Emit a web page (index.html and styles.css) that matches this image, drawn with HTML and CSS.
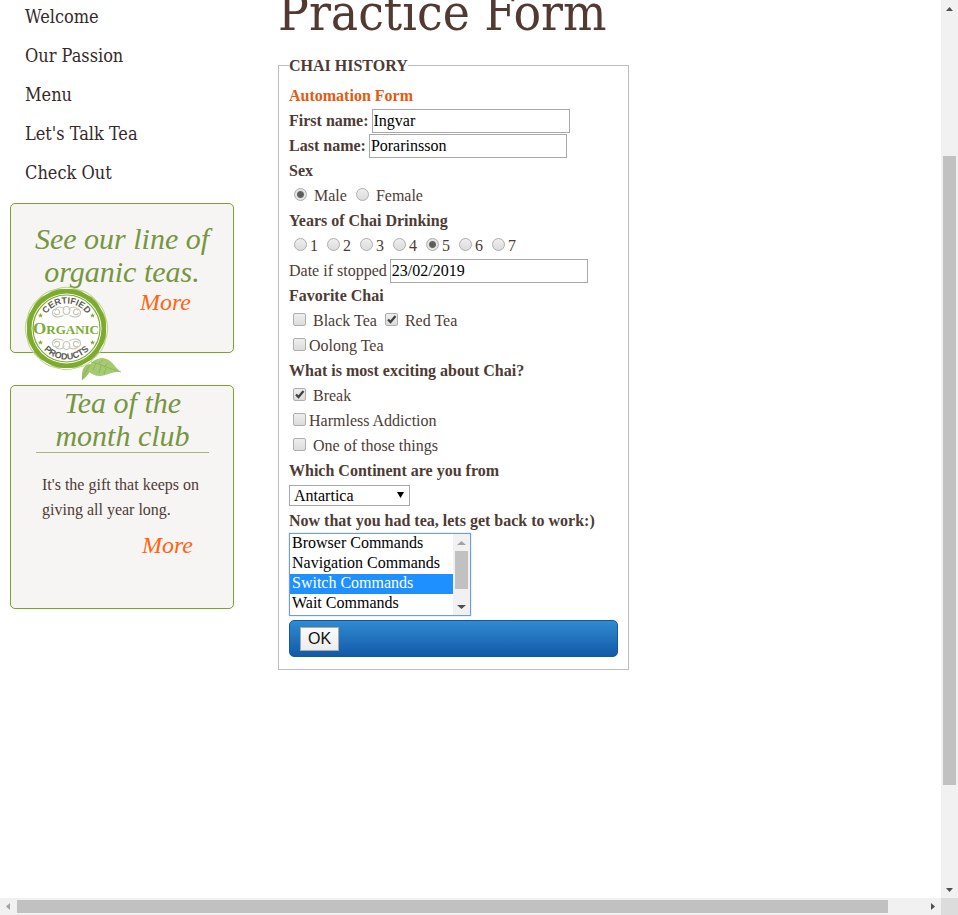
FILE: index.html
```html
<!DOCTYPE html>
<html lang="en">
<head>
<meta charset="utf-8">
<title>Practice Form</title>
<link rel="stylesheet" href="styles.css">
</head>
<body>
<div class="page">
  <aside class="sidebar">
    <nav class="menu">
      <a href="#">Welcome</a>
      <a href="#">Our Passion</a>
      <a href="#">Menu</a>
      <a href="#">Let's Talk Tea</a>
      <a href="#">Check Out</a>
    </nav>
    <section class="promo organic">
      <h2>See our line of<br>organic teas.</h2>
      <a class="more" href="#">More</a>
      <svg class="badge" width="100" height="98" viewBox="22 284 100 98" aria-hidden="true">
        <defs>
          <path id="arcTop" d="M41.500 328.500a25 25 0 0 1 50 0"/>
          <path id="arcBottom" d="M35.500 328.500a31 31 0 0 0 62 0"/>
          <path id="star" d="M0-2.600 .7-.8 2.500-.8 1.100.4 1.600 2.200 0 1.100-1.600 2.200-1.100.4-2.500-.8-.7-.8Z"/>
        </defs>
        <g transform="translate(66.500 328.500)">
          <g fill="none" stroke="#bdd48c" stroke-width="1">
            <rect x="-37" y="-37" width="74" height="74" rx="27" transform="rotate(15)"/>
            <rect x="-37" y="-37" width="74" height="74" rx="27" transform="rotate(45)"/>
            <rect x="-37" y="-37" width="74" height="74" rx="27" transform="rotate(75)"/>
          </g>
          <g fill="#7eab2f">
            <rect x="-37" y="-37" width="74" height="74" rx="30"/>
            <rect x="-37" y="-37" width="74" height="74" rx="30" transform="rotate(30)"/>
            <rect x="-37" y="-37" width="74" height="74" rx="30" transform="rotate(60)"/>
          </g>
          <circle r="35" fill="#fff"/>
          <circle r="33.500" fill="#fff" stroke="#7eab2f" stroke-width="1.200"/>
          <g fill="none" stroke="#c5c4b4" stroke-width="1.100">
            <path d="M0-14c-4 0-5-8 0-8s4 8 0 8M-3-13c-7 3-11 1-11-3s6-5 7-1-5 4-5 1M-2-19c-3-4-9-3-9 1M3-13c7 3 11 1 11-3s-6-5-7-1 5 4 5 1M2-19c3-4 9-3 9 1"/>
            <path d="M0 13c-4 0-5 8 0 8s4-8 0-8M-3 12c-7-3-11-1-11 3s6 5 7 1-5-4-5-1M-2 18c-3 4-9 3-9-1M3 12c7-3 11-1 11 3s-6 5-7 1 5-4 5-1M2 18c3 4 9 3 9-1"/>
          </g>
          <g fill="#7eab2f">
            <use href="#star" x="-26" y="-13"/><use href="#star" x="26" y="-13"/>
            <use href="#star" x="-26" y="14"/><use href="#star" x="26" y="14"/>
          </g>
        </g>
        <text class="badge-ring"><textPath href="#arcTop" startOffset="50%">CERTIFIED</textPath></text>
        <text class="badge-ring"><textPath href="#arcBottom" startOffset="50%">PRODUCTS</textPath></text>
        <text class="badge-name" x="66" y="334"><tspan class="badge-cap">O</tspan>RGANIC</text>
        <path d="M82 380c-1-10 2-16 9-16 1 6-3 12-9 16Z" fill="#9fc368"/>
        <path d="M89 372c-1-9 6-14 14-14 9 1 11 9 18 14-8-1-14 4-21 4-5 0-8-2-11-4Z" fill="#a6ca72"/>
        <path d="M91 362c8 1 18 7 30 10M96 363l-3 7M101 365l-2 8M106 368l-2 6M98 364l5-4M104 367l4-4M82 380c2-5 4-9 8-15" fill="none" stroke="#85b053" stroke-width=".7"/>
      </svg>
    </section>
    <section class="promo club">
      <h2>Tea of the<br>month club</h2>
      <p>It's the gift that keeps on giving all year long.</p>
      <a class="more" href="#">More</a>
    </section>
  </aside>
  <main class="content">
    <h1>Practice Form</h1>
    <form>
      <fieldset>
        <legend>CHAI HISTORY</legend>
        <h3 class="row accent">Automation Form</h3>
        <div class="row field"><label class="strong" for="first">First name:</label><input class="text" id="first" type="text" value="Ingvar"></div>
        <div class="row field"><label class="strong" for="last">Last name:</label><input class="text" id="last" type="text" value="Porarinsson"></div>
        <div class="row strong">Sex</div>
        <div class="row">
          <input type="radio" name="sex" id="male" checked> <label for="male">Male</label>
          <input type="radio" name="sex" id="female"> <label for="female">Female</label>
        </div>
        <div class="row strong">Years of Chai Drinking</div>
        <div class="row">
          <input type="radio" name="years" id="y1"><label for="y1">1</label>
          <input type="radio" name="years" id="y2"><label for="y2">2</label>
          <input type="radio" name="years" id="y3"><label for="y3">3</label>
          <input type="radio" name="years" id="y4"><label for="y4">4</label>
          <input type="radio" name="years" id="y5" checked><label for="y5">5</label>
          <input type="radio" name="years" id="y6"><label for="y6">6</label>
          <input type="radio" name="years" id="y7"><label for="y7">7</label>
        </div>
        <div class="row field"><label for="stopped">Date if stopped</label><input class="text" id="stopped" type="text" value="23/02/2019"></div>
        <div class="row strong">Favorite Chai</div>
        <div class="row">
          <input type="checkbox" id="black"> <label for="black">Black Tea</label>
          <input type="checkbox" id="red" checked> <label for="red">Red Tea</label>
        </div>
        <div class="row"><input type="checkbox" id="oolong"><label for="oolong">Oolong Tea</label></div>
        <div class="row strong">What is most exciting about Chai?</div>
        <div class="row"><input type="checkbox" id="break" checked> <label for="break">Break</label></div>
        <div class="row"><input type="checkbox" id="harmless"><label for="harmless">Harmless Addiction</label></div>
        <div class="row"><input type="checkbox" id="things"> <label for="things">One of those things</label></div>
        <label class="row strong" for="continent">Which Continent are you from</label>
        <div class="row field">
          <span class="dropdown">
            <select id="continent"><option>Antartica</option></select>
            <svg class="caret" width="7" height="6" viewBox="0 0 7 6" aria-hidden="true"><path d="M0 0h7L3.500 6Z"/></svg>
          </span>
        </div>
        <label class="row strong" for="commands">Now that you had tea, lets get back to work:)</label>
        <div class="listbox">
          <select id="commands" multiple size="4">
            <option>Browser Commands</option>
            <option>Navigation Commands</option>
            <option selected>Switch Commands</option>
            <option>Wait Commands</option>
          </select>
          <div class="bar vertical" aria-hidden="true">
            <svg class="arrow faint" width="17" height="17" viewBox="0 0 17 17"><path d="M4 11h9L8.500 7Z"/></svg>
            <div class="thumb list-thumb"></div>
            <div class="list-rest"></div>
            <svg class="arrow" width="17" height="17" viewBox="0 0 17 17"><path d="M4 7h9l-4.500 4Z"/></svg>
          </div>
        </div>
        <div class="submit"><button type="button">OK</button></div>
      </fieldset>
    </form>
  </main>
</div>
<div class="bar vertical" aria-hidden="true">
  <svg class="arrow" width="17" height="17" viewBox="0 0 17 17"><path d="M5 11h7L8.500 7Z"/></svg>
  <div class="page-before"></div>
  <div class="thumb page-thumb"></div>
  <div class="page-after"></div>
  <svg class="arrow" width="17" height="17" viewBox="0 0 17 17"><path d="M5 7h7l-3.500 4Z"/></svg>
</div>
<div class="bar horizontal" aria-hidden="true">
  <svg class="arrow faint" width="17" height="17" viewBox="0 0 17 17"><path d="M10 5v7L6 8.500Z"/></svg>
  <div class="thumb wide-thumb"></div>
  <div class="wide-after"></div>
  <svg class="arrow" width="17" height="17" viewBox="0 0 17 17"><path d="M7 5v7l4-3.500Z"/></svg>
</div>
<div class="corner"></div>
</body>
</html>
```
FILE: styles.css
```css
* { box-sizing: border-box; }

body {
  margin: 0;
  height: 100vh;
  display: grid;
  grid-template-columns: minmax(0, 1fr) 17px;
  grid-template-rows: minmax(0, 1fr) 17px;
  background: #fff;
  color: #4e3b35;
  font: 16px/25px "Liberation Serif", serif;
}

.page {
  display: flex;
  align-items: flex-start;
  gap: 44px;
  padding-left: 10px;
  overflow: hidden;
}

/* Sidebar */
.sidebar {
  flex: 0 0 224px;
  margin-top: -3px;
}
.menu {
  display: flex;
  flex-direction: column;
  padding-left: 15px;
  margin-bottom: 11px;
}
.menu a {
  color: #36292a;
  font: 18px/39px "DejaVu Serif Condensed", "DejaVu Serif", serif;
  text-decoration: none;
}
.promo {
  position: relative;
  display: flex;
  flex-direction: column;
  border: 1px solid #7aa32a;
  border-radius: 5px;
  background: #f6f5f4;
}
.promo h2 {
  margin: 0;
  color: #76963f;
  font: italic 30px/33px "Liberation Serif", serif;
  text-align: center;
}
.more {
  align-self: flex-end;
  color: #ff6412;
  font: italic 24px/28px "Liberation Serif", serif;
  text-decoration: none;
}
.organic {
  min-height: 150px;
  margin-bottom: 32px;
  padding: 18px 0 0;
}
.organic .more { margin-right: 42px; }
.badge {
  position: absolute;
  left: 11px;
  top: 80px;
}
.badge-ring {
  fill: #5b5b55;
  font: bold 9px "Liberation Sans", sans-serif;
  text-anchor: middle;
}
.badge-name {
  fill: #7eab2f;
  font: bold 13px "Liberation Serif", serif;
  text-anchor: middle;
}
.badge-cap { font-size: 17px; }
.club {
  min-height: 224px;
  padding: 0 24px 0 25px;
}
.club h2 { border-bottom: 1px solid #a3b87c; }
.club p { margin: 19px 0 9px 6px; }
.club .more { margin-right: 16px; }

/* Form */
.content { margin-top: -17px; }
h1 {
  margin: 0 0 10px;
  color: #523a33;
  font: 51px/60px "DejaVu Serif Condensed", "DejaVu Serif", serif;
  white-space: nowrap;
}
fieldset {
  width: 351px;
  margin: 0;
  padding: 5px 10px 12px;
  border: 1px solid #bdbdbd;
}
legend {
  padding: 0;
  font-weight: bold;
}
.row {
  display: block;
  height: 25px;
  margin: 0;
}
.strong, .accent {
  font-size: 16px;
  font-weight: bold;
}
.accent { color: #e55a10; }
.field {
  display: flex;
  align-items: center;
  gap: 3px;
}
.text {
  width: 198px;
  height: 24px;
  padding: 1px;
  border: 1px solid #a9a9a9;
  background: #fff;
  color: #000;
  font: inherit;
}
input[type="radio"], input[type="checkbox"] {
  appearance: none;
  width: 13px;
  height: 13px;
  border: 1px solid #adadad;
  background: linear-gradient(#eee, #dcdcdc);
  vertical-align: baseline;
}
input[type="radio"] {
  margin: 0 3px 0 5px;
  border-radius: 50%;
}
input[type="checkbox"] {
  margin: 0 3px 0 4px;
  border-radius: 2px;
}
input[type="radio"]:checked {
  background: radial-gradient(circle, #5c5c5c 0 2px, #666 3px, #e4e4e4 4px);
}
input[type="checkbox"]:checked {
  background: url("data:image/svg+xml,%3Csvg xmlns='http://www.w3.org/2000/svg' viewBox='0 0 11 11'%3E%3Cpath d='M2 5.500 4.500 8 9.500 2' fill='none' stroke='%23404040' stroke-width='2.200'/%3E%3C/svg%3E"), linear-gradient(#eee, #dcdcdc);
}
.dropdown {
  position: relative;
  display: flex;
}
.dropdown select {
  appearance: none;
  width: 121px;
  height: 21px;
  padding: 0 4px;
  border: 1px solid #a9a9a9;
  border-radius: 0;
  background: #fff;
  color: #000;
  font: 16px/19px "Liberation Serif", serif;
}
.caret {
  position: absolute;
  right: 6px;
  top: 7px;
  pointer-events: none;
}
.listbox {
  display: flex;
  width: 182px;
  height: 83px;
  border: 1px solid #6f9bdf;
  box-shadow: 0 0 1px 0 #86aef0;
}
.listbox select {
  flex: 1;
  min-width: 0;
  height: 100%;
  padding: 0;
  border: 0;
  border-radius: 0;
  outline: 0;
  background: #fff;
  color: #000;
  font: 16px/20px "Liberation Serif", serif;
  overflow: hidden;
}
.listbox option {
  min-height: 20px;
  padding: 0 2px;
}
.listbox option:checked {
  background: linear-gradient(#1e90ff, #1e90ff);
  -webkit-text-fill-color: #fff;
}
.submit {
  display: flex;
  margin-top: 4px;
  padding: 6px 10px 5px;
  border: 1px solid #125a9f;
  border-radius: 5px;
  background: linear-gradient(#318ad1, #115aa7);
}
.submit button {
  width: 39px;
  height: 24px;
  padding: 0;
  border: 1px solid #a9a9a9;
  background: linear-gradient(#fafafa, #ededed);
  color: #111;
  font: 16px/20px "Liberation Sans", sans-serif;
}

/* Scrollbars */
.bar {
  display: flex;
  background: #f1f1f1;
}
.vertical {
  flex: 0 0 17px;
  flex-direction: column;
}
.arrow {
  flex: none;
  fill: #505050;
}
.faint { fill: #a3a3a3; }
.thumb { background: #c1c1c1; }
.vertical .thumb { margin: 0 2px; }
.horizontal .thumb { margin: 2px 0; }
.page-before { flex: 139; }
.page-thumb { flex: 629; }
.page-after { flex: 96; }
.wide-thumb { flex: 871; }
.wide-after { flex: 36; }
.list-thumb { flex: 38; }
.list-rest { flex: 9; }
.corner { background: #dcdcdc; }
```
